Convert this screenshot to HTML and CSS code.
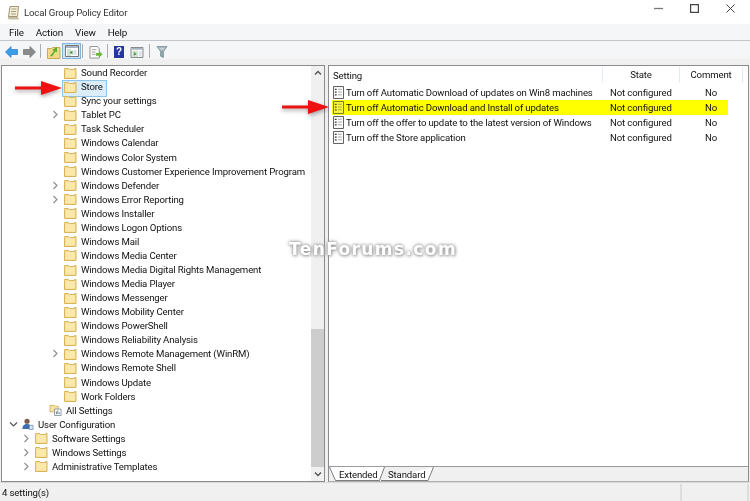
FILE: index.html
```html
<!DOCTYPE html>
<html lang="en">
<head>
<meta charset="utf-8">
<title>Local Group Policy Editor</title>
<link rel="stylesheet" href="styles.css">
</head>
<body>
<svg class="defs" width="0" height="0" aria-hidden="true">
  <symbol id="folder" viewBox="0 0 13 12">
    <path d="M.5 2.500V1.500h4l1 1h5v-1h1.500v10H.5z" fill="#f6dc8e" stroke="#d9b45a"/>
    <path d="M1.500 3.500h9.500v1H1.500z" fill="#fdf3cf"/>
    <path d="M1.500 4.500h9.500v6H1.500z" fill="#fbe8aa"/>
  </symbol>
  <symbol id="chev" viewBox="0 0 7 9"><path d="M1.500 1l3.500 3.500L1.500 8" fill="none" stroke="#8c8c8c" stroke-width="1.100"/></symbol>
  <symbol id="doc" viewBox="0 0 12 14">
    <path d="M.5.500h11v13H.5z" fill="#fff" stroke="#4d4d4d"/>
    <path d="M2 3.500h2M2 6.500h2M2 9.500h2" stroke="#333" stroke-width="1.400" fill="none"/>
    <path d="M5.500 3.500h4M5.500 6.500h4M5.500 9.500h4" stroke="#9a9a9a" fill="none"/>
  </symbol>
  <symbol id="docy" viewBox="0 0 12 14">
    <path d="M.5.500h11v13H.5z" fill="#f8f83c" stroke="#6a6a30"/>
    <path d="M2 3.500h2M2 6.500h2M2 9.500h2" stroke="#55551a" stroke-width="1.400" fill="none"/>
    <path d="M5.500 3.500h4M5.500 6.500h4M5.500 9.500h4" stroke="#a5a530" fill="none"/>
  </symbol>
</svg>

<div class="app">
  <header class="titlebar">
    <svg class="appicon" width="13" height="15" viewBox="0 0 13 15"><path d="M3 1.500h8.500l-1 10H1.500z" fill="#f3eed8" stroke="#a09878"/><path d="M4.500 4h5M4 6.500h5M4 9h5" stroke="#a59d80"/><path d="M1 12h9l1.500 2H2z" fill="#d8d0b0" stroke="#a09878" stroke-width=".6"/></svg>
    <span class="apptitle">Local Group Policy Editor</span>
    <div class="winbtns">
      <svg width="9" height="9" viewBox="0 0 9 9"><path d="M0 4.500h9" stroke="#777" stroke-width="1.300"/></svg>
      <svg width="9" height="9" viewBox="0 0 9 9"><path d="M.6.600h7.800v7.800H.6z" fill="none" stroke="#444" stroke-width="1.200"/></svg>
      <svg width="9" height="9" viewBox="0 0 9 9"><path d="M.5.500l8 8M8.500.500l-8 8" stroke="#444" stroke-width="1"/></svg>
    </div>
  </header>

  <nav class="menubar"><span>File</span><span>Action</span><span>View</span><span>Help</span></nav>

  <div class="toolbar">
    <svg class="tb back" width="13" height="12" viewBox="0 0 13 12"><path d="M6 .5L.5 6 6 11.500V8.500h6.500v-5H6z" fill="#3b9ee8" stroke="#2a78c4" stroke-width=".7"/></svg>
    <svg class="tb fwd" width="13" height="12" viewBox="0 0 13 12"><path d="M7 .5L12.500 6 7 11.500V8.500H.5v-5H7z" fill="#8a8a8a" stroke="#707070" stroke-width=".7"/></svg>
    <i class="sep s1"></i>
    <svg class="tb up" width="14" height="14" viewBox="0 0 14 14"><path d="M.5 3.500h4l1-1h7.500v11H.5z" fill="#f4d98a" stroke="#c9a858"/><path d="M3 11l4-5-2-1 5-3 0 5.500-1.500-1L5 11.500z" fill="#5fae2e"/></svg>
    <span class="tbsel"><svg width="14" height="12" viewBox="0 0 14 12"><path d="M.5.500h13v11H.5z" fill="#fff" stroke="#777"/><path d="M1 1h12v2H1z" fill="#a9b4c2"/><path d="M2 4h4v7H2z" fill="#cfe3cf"/><path d="M7.500 5.500v4L4.500 7.500z" fill="#3f9a4a"/><path d="M8.500 5h3v5h-3z" fill="#d6dee8"/></svg></span>
    <i class="sep s2"></i>
    <svg class="tb exp" width="14" height="13" viewBox="0 0 14 14"><path d="M.5.500h8l2 2.500v10H.5z" fill="#fff" stroke="#8a8a8a"/><path d="M2.500 4h5M2.500 6.500h4M2.500 9h4" stroke="#9a9a9a"/><path d="M7 7.500h3.500V5.500L14 9l-3.500 3.500v-2H7z" fill="#6ab93a"/></svg>
    <i class="sep s3"></i>
    <span class="help">?</span>
    <span class="tbview"><svg width="14" height="11" viewBox="0 0 14 12"><path d="M.5.500h13v11H.5z" fill="#fff" stroke="#777"/><path d="M1 1h12v2H1z" fill="#a9b4c2"/><path d="M2 4h6v7H2z" fill="#cfe3cf"/><path d="M3.500 5.500v4L6.500 7.500z" fill="#3f9a4a"/><path d="M9.500 4.500h2.500v6H9.500z" fill="#d6dee8"/></svg></span>
    <i class="sep s4"></i>
    <svg class="tb filt" width="12" height="12" viewBox="0 0 12 13"><path d="M.5.500h11L7.500 6v6.500l-3-1.500V6z" fill="#8fa5ad" stroke="#64808a" stroke-width=".7"/><path d="M2 1.500h8L7 5H5z" fill="#c4d2d8"/></svg>
  </div>

  <main class="panes">
    <section class="treepane">
      <div class="tree">
        <div class="row l2"><svg class="fo"><use href="#folder"/></svg><span>Sound Recorder</span></div>
        <div class="row l2 sel"><svg class="fo"><use href="#folder"/></svg><span>Store</span></div>
        <div class="row l2"><svg class="fo"><use href="#folder"/></svg><span>Sync your settings</span></div>
        <div class="row l2 exp-row"><svg class="ch"><use href="#chev"/></svg><svg class="fo"><use href="#folder"/></svg><span>Tablet PC</span></div>
        <div class="row l2"><svg class="fo"><use href="#folder"/></svg><span>Task Scheduler</span></div>
        <div class="row l2"><svg class="fo"><use href="#folder"/></svg><span>Windows Calendar</span></div>
        <div class="row l2"><svg class="fo"><use href="#folder"/></svg><span>Windows Color System</span></div>
        <div class="row l2"><svg class="fo"><use href="#folder"/></svg><span>Windows Customer Experience Improvement Program</span></div>
        <div class="row l2 exp-row"><svg class="ch"><use href="#chev"/></svg><svg class="fo"><use href="#folder"/></svg><span>Windows Defender</span></div>
        <div class="row l2 exp-row"><svg class="ch"><use href="#chev"/></svg><svg class="fo"><use href="#folder"/></svg><span>Windows Error Reporting</span></div>
        <div class="row l2"><svg class="fo"><use href="#folder"/></svg><span>Windows Installer</span></div>
        <div class="row l2"><svg class="fo"><use href="#folder"/></svg><span>Windows Logon Options</span></div>
        <div class="row l2"><svg class="fo"><use href="#folder"/></svg><span>Windows Mail</span></div>
        <div class="row l2"><svg class="fo"><use href="#folder"/></svg><span>Windows Media Center</span></div>
        <div class="row l2"><svg class="fo"><use href="#folder"/></svg><span>Windows Media Digital Rights Management</span></div>
        <div class="row l2"><svg class="fo"><use href="#folder"/></svg><span>Windows Media Player</span></div>
        <div class="row l2"><svg class="fo"><use href="#folder"/></svg><span>Windows Messenger</span></div>
        <div class="row l2"><svg class="fo"><use href="#folder"/></svg><span>Windows Mobility Center</span></div>
        <div class="row l2"><svg class="fo"><use href="#folder"/></svg><span>Windows PowerShell</span></div>
        <div class="row l2"><svg class="fo"><use href="#folder"/></svg><span>Windows Reliability Analysis</span></div>
        <div class="row l2 exp-row"><svg class="ch"><use href="#chev"/></svg><svg class="fo"><use href="#folder"/></svg><span>Windows Remote Management (WinRM)</span></div>
        <div class="row l2"><svg class="fo"><use href="#folder"/></svg><span>Windows Remote Shell</span></div>
        <div class="row l2"><svg class="fo"><use href="#folder"/></svg><span>Windows Update</span></div>
        <div class="row l2"><svg class="fo"><use href="#folder"/></svg><span>Work Folders</span></div>
        <div class="row l1a"><svg class="fo" viewBox="0 0 13 13"><path d="M.5 1.500h5l1 1h3v6H.5z" fill="#f6e2a4" stroke="#d2b264"/><path d="M5.500 5.500h7v7h-7z" fill="#fff" stroke="#8a96a4"/><path d="M7.500 11V8M9 11V7M10.500 11V9" stroke="#6f7f90"/></svg><span>All Settings</span></div>
        <div class="row l0"><svg class="ch dn" viewBox="0 0 9 7"><path d="M1 1.500l3.500 3.500L8 1.500" fill="none" stroke="#555" stroke-width="1.200"/></svg><svg class="fo" viewBox="0 0 13 13"><circle cx="6" cy="3.500" r="2.800" fill="#7a5c48"/><path d="M1 12c0-4 2-5.500 5-5.500s5 1.500 5 5.500z" fill="#3f6fb0"/><path d="M8.500 8h4v4.500h-4z" fill="#dce6f2" stroke="#5c7ea8" stroke-width=".7"/></svg><span>User Configuration</span></div>
        <div class="row l1"><svg class="ch"><use href="#chev"/></svg><svg class="fo"><use href="#folder"/></svg><span>Software Settings</span></div>
        <div class="row l1"><svg class="ch"><use href="#chev"/></svg><svg class="fo"><use href="#folder"/></svg><span>Windows Settings</span></div>
        <div class="row l1"><svg class="ch"><use href="#chev"/></svg><svg class="fo"><use href="#folder"/></svg><span>Administrative Templates</span></div>
      </div>
      <div class="scrollbar">
        <svg class="sb-arrow" width="8" height="6" viewBox="0 0 8 6"><path d="M1 4.500l3-3 3 3" fill="none" stroke="#555" stroke-width="1.400"/></svg>
        <div class="sb-track"><div class="sb-thumb"></div></div>
        <svg class="sb-arrow" width="8" height="6" viewBox="0 0 8 6"><path d="M1 1.500l3 3 3-3" fill="none" stroke="#555" stroke-width="1.400"/></svg>
      </div>
    </section>

    <section class="listpane">
      <div class="list">
        <div class="lhead"><span class="c1">Setting</span><span class="c2">State</span><span class="c3">Comment</span></div>
        <div class="lrow"><svg class="di"><use href="#doc"/></svg><span class="c1">Turn off Automatic Download of updates on Win8 machines</span><span class="c2">Not configured</span><span class="c3">No</span></div>
        <div class="lrow hi"><svg class="di"><use href="#docy"/></svg><span class="c1">Turn off Automatic Download and Install of updates</span><span class="c2">Not configured</span><span class="c3">No</span></div>
        <div class="lrow"><svg class="di"><use href="#doc"/></svg><span class="c1">Turn off the offer to update to the latest version of Windows</span><span class="c2">Not configured</span><span class="c3">No</span></div>
        <div class="lrow"><svg class="di"><use href="#doc"/></svg><span class="c1">Turn off the Store application</span><span class="c2">Not configured</span><span class="c3">No</span></div>
      </div>
      <div class="tabs">
        <svg class="tabshape" width="106" height="14" viewBox="0 0 106 14"><path d="M.5 0l6 13.500h44L55.500 0M52 13.500h47L104.500 0" fill="#fff" stroke="#7d7d7d"/></svg>
        <span class="tab t1">Extended</span><span class="tab t2">Standard</span>
      </div>
    </section>
  </main>

  <footer class="status"><span class="st1">4 setting(s)</span><i class="st2"></i><i class="st3"></i></footer>

  <svg class="arrow a1" width="52" height="18" viewBox="0 0 52 18"><path d="M1 7.500h26V2l21 7-21 7V10.500H1z" fill="#ee1111"/></svg>
  <svg class="arrow a2" width="52" height="18" viewBox="0 0 52 18"><path d="M1 7.500h26V2l21 7-21 7V10.500H1z" fill="#ee1111"/></svg>
  <div class="watermark">TenForums.com</div>
</div>
</body>
</html>
```

FILE: styles.css
```css
* { box-sizing: border-box; }
html, body { margin: 0; padding: 0; }
body { width: 750px; height: 501px; overflow: hidden; background: #fff; font-family: Roboto, "Open Sans", sans-serif; font-size: 9.6px; letter-spacing: -.14px; color: #111; }
.defs { position: absolute; }
.app { position: relative; width: 750px; height: 501px; display: flex; flex-direction: column; filter: blur(.25px); }

.titlebar { height: 24px; display: flex; align-items: center; padding-left: 7px; background: #fff; }
.appicon { margin-right: 4px; }
.apptitle { font-size: 9.6px; color: #333; }
.winbtns { margin-left: auto; display: flex; gap: 27px; padding-right: 15px; margin-top: -8px; }

.menubar { height: 17px; display: flex; align-items: center; gap: 12px; padding-left: 9px; background: #f5f6f7; border-bottom: 1px solid #c4c8cc; font-size: 9.8px; }

.toolbar { position: relative; height: 18px; background: #f5f6f7; }
.toolbar svg { display: block; }
.tb { position: absolute; }
.back { left: 5px; top: 5px; }
.fwd { left: 23px; top: 5px; }
.up { left: 47px; top: 4px; }
.exp { left: 89px; top: 5px; }
.filt { left: 156px; top: 5px; }
.tbsel { position: absolute; left: 62px; top: 2px; width: 19px; height: 16px; background: #cce4f7; border: 1px solid #7fb4de; display: flex; align-items: center; justify-content: center; }
.tbview { position: absolute; left: 130px; top: 6px; }
.help { position: absolute; left: 114px; top: 5px; width: 10px; height: 12px; background: #25379c; color: #fff; font: bold 10px/12px "Liberation Sans", sans-serif; text-align: center; }
.sep { position: absolute; top: 3px; width: 1px; height: 14px; background: #a9adb2; }
.s1 { left: 40px; } .s2 { left: 82px; } .s3 { left: 107px; } .s4 { left: 149px; }

.panes { flex: 1; min-height: 0; display: flex; gap: 3px; padding: 6px 1px 0 1px; background: #f0f0f0; }
.treepane { width: 324px; display: flex; background: #fff; border: 1px solid #8a8a8f; }
.tree { flex: 1; min-width: 0; display: grid; grid-auto-rows: 14.07px; align-content: start; margin-top: -.4px; }
.row { position: relative; display: flex; align-items: center; white-space: nowrap; }
.row span { margin-left: 4px; line-height: 13px; }
.fo { width: 13px; height: 12px; flex: none; }
.ch { width: 7px; height: 9px; flex: none; margin-right: 5px; }
.ch.dn { width: 9px; height: 7px; margin-right: 3px; }
.l2 { padding-left: 62px; }
.l2.exp-row { padding-left: 50px; }
.l1a { padding-left: 47px; }
.l0 { padding-left: 7px; }
.l1 { padding-left: 21px; }
.sel::before { content: ""; position: absolute; left: 60px; top: 0; width: 43px; height: 15px; background: #dcedfa; border: 1px solid #8fc4ea; z-index: 0; }
.sel > * { position: relative; z-index: 1; }

.scrollbar { width: 13px; background: #f0f0f0; display: flex; flex-direction: column; align-items: center; }
.sb-arrow { flex: none; margin: 4px 0; }
.sb-track { flex: 1; width: 100%; display: flex; flex-direction: column; justify-content: flex-end; }
.sb-thumb { height: 138px; background: #cdcdcd; }

.listpane { flex: 1; min-width: 0; display: flex; flex-direction: column; border: 1px solid #8a8a8f; border-bottom-color: #b0b0b0; background: #f0f0f0; }
.list { height: 401px; flex: none; background: #fff; border-bottom: 1px solid #9a9aa0; padding: 1px 0 0 3px; }
.lhead { height: 16px; margin-left: -3px; padding-left: 4px; display: flex; align-items: center; }
.lhead .c1 { width: 270px; }
.lhead .c2 { width: 78px; text-align: center; border-left: 1px solid #e4eaf2; border-right: 1px solid #e4eaf2; height: 16px; line-height: 16px; margin-left: -1px; }
.lhead .c3 { width: 63px; text-align: center; height: 16px; line-height: 16px; border-right: 1px solid #e4eaf2; }
.lrow { height: 15px; display: flex; align-items: center; width: 396px; white-space: nowrap; }
.lhead + .lrow { margin-top: 2px; }
.di { width: 11px; height: 13px; flex: none; margin: 0 2px 0 1px; }
.lrow .c1 { width: 264px; }
.lrow .c2 { width: 95px; }
.lrow .c3 { flex: 1; }
.hi { background: #ffff00; }

.tabs { position: relative; height: 14px; flex: none; }
.tabshape { position: absolute; left: 0; top: 0; }
.tab { position: absolute; top: 1px; line-height: 13px; }
.t1 { left: 10px; } .t2 { left: 59px; }

.status { height: 19px; flex: none; display: flex; align-items: center; background: #f0f0f0; border-top: 1px solid #d8d8d8; position: relative; padding-left: 2px; }
.st2, .st3 { position: absolute; top: 1px; bottom: 0; width: 2px; background: #dcdcdc; }
.st2 { left: 680px; } .st3 { left: 747px; }

.arrow { position: absolute; filter: drop-shadow(0 2px 2px rgba(0,0,0,.35)); }
.a1 { left: 14px; top: 79px; }
.a2 { left: 281px; top: 98px; }

.watermark { position: absolute; left: 289px; top: 238px; font: bold 17px/22px "DejaVu Sans", sans-serif; letter-spacing: 1.4px; color: #fff; text-shadow: 0 0 3px #999, 0 0 4px #aaa, 1px 1px 3px #bbb; white-space: nowrap; }
```
